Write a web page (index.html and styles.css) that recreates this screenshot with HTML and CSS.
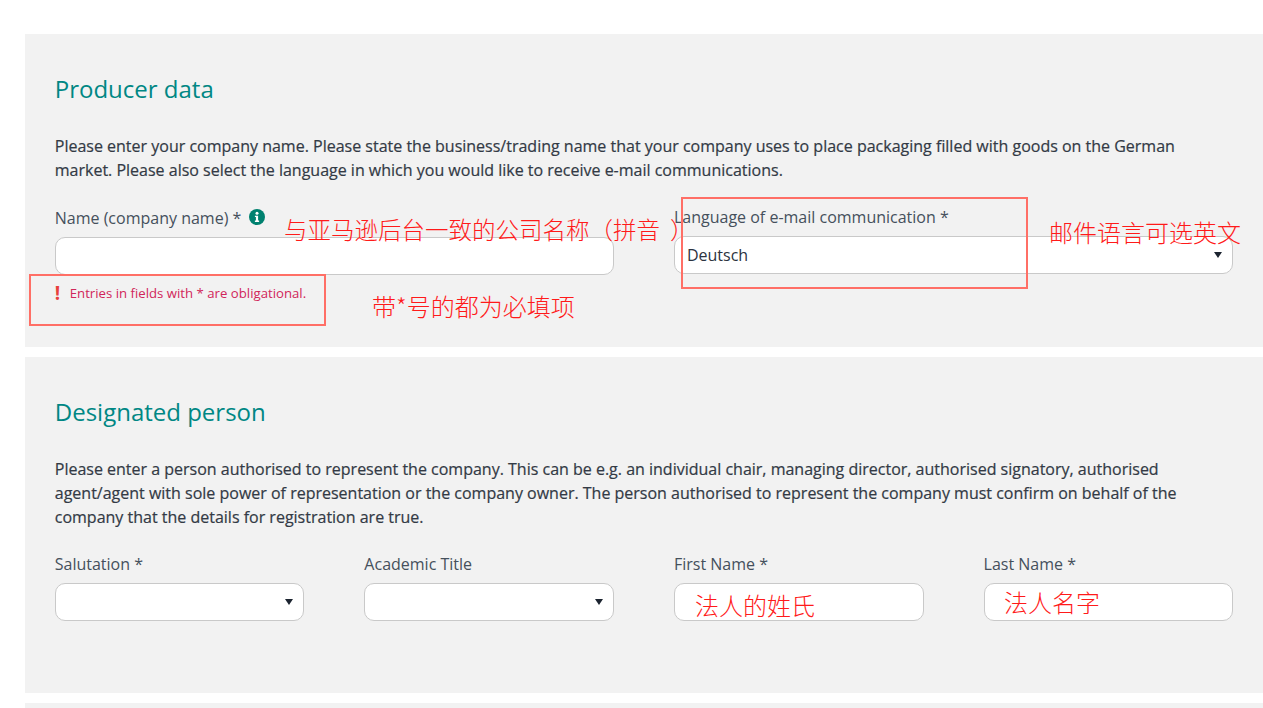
FILE: index.html
```html
<!DOCTYPE html>
<html lang="en">
<head>
<meta charset="utf-8">
<title>Producer data</title>
<link rel="stylesheet" href="styles.css">
</head>
<body>
<main class="page">
  <section class="panel panel-producer">
    <h2 class="panel-title">Producer data</h2>
    <p class="panel-text">Please enter your company name. Please state the business/trading name that your company uses to place packaging filled with goods on the German market. Please also select the language in which you would like to receive e-mail communications.</p>
    <div class="grid grid-two">
      <div class="field">
        <div class="field-label"><span>Name (company name) *</span><svg class="info-icon" viewBox="0 0 16 16" aria-hidden="true"><circle cx="8" cy="8" r="8" fill="#00816f"/><circle cx="8" cy="4.3" r="1.5" fill="#fff"/><path d="M5.9 6.7h3.2v4.9h1v1.3H5.9v-1.3h1v-3.6h-1z" fill="#fff"/></svg></div>
        <div class="control"></div>
        <div class="hint"><span class="hint-mark">!</span><span>Entries in fields with * are obligational.</span></div>
      </div>
      <div class="field field-raised">
        <div class="field-label">Language of e-mail communication *</div>
        <div class="control control-select">Deutsch</div>
      </div>
    </div>
  </section>

  <section class="panel panel-person">
    <h2 class="panel-title">Designated person</h2>
    <p class="panel-text">Please enter a person authorised to represent the company. This can be e.g. an individual chair, managing director, authorised signatory, authorised agent/agent with sole power of representation or the company owner. The person authorised to represent the company must confirm on behalf of the company that the details for registration are true.</p>
    <div class="grid grid-four">
      <div class="field"><div class="field-label">Salutation *</div><div class="control control-select"></div></div>
      <div class="field"><div class="field-label">Academic Title</div><div class="control control-select"></div></div>
      <div class="field"><div class="field-label">First Name *</div><div class="control"></div></div>
      <div class="field"><div class="field-label">Last Name *</div><div class="control"></div></div>
    </div>
  </section>

  <section class="panel panel-next"></section>
</main>

<div class="note note-name">与亚马逊后台一致的公司名称（拼音<span class="note-bracket">）</span></div>
<div class="note note-lang">邮件语言可选英文</div>
<div class="note note-required">带*号的都为必填项</div>
<div class="note note-first">法人的姓氏</div>
<div class="note note-last">法人名字</div>
<div class="mark-box mark-hint"></div>
<div class="mark-box mark-lang"></div>
</body>
</html>
```
FILE: styles.css
```css
* { box-sizing: border-box; }

html, body {
  margin: 0;
  height: 708px;
  overflow: hidden;
  background: #fff;
}

body {
  position: relative;
  font-family: "Open Sans", "Noto Sans CJK SC", sans-serif;
  color: #333a45;
}

.page {
  padding: 34px 0 0 25px;
  display: flex;
  flex-direction: column;
  gap: 10px;
}

.panel {
  background: #f2f2f2;
  padding: 40px 29.85px 0 29.75px;
}

.panel-producer { height: 313px; }
.panel-person { height: 336px; }
.panel-next { height: 40px; padding: 0; }

.panel-title {
  margin: 0;
  font-size: 24px;
  font-weight: 400;
  line-height: 30px;
  color: #008784;
}

.panel-text {
  margin: 30px 0 0;
  font-size: 16px;
  line-height: 24px;
  -webkit-text-stroke: 0.2px #333a45;
}

.grid {
  display: grid;
  column-gap: 60px;
}

.grid-two { grid-template-columns: 1fr 1fr; margin-top: 24px; }
.grid-four { grid-template-columns: repeat(4, 1fr); margin-top: 23px; }

.field-label {
  display: flex;
  align-items: center;
  height: 24px;
  font-size: 16px;
  line-height: 24px;
  color: #45505c;
}

.info-icon {
  width: 16px;
  height: 16px;
  margin-left: 8px;
  margin-top: -2px;
}

.control {
  position: relative;
  height: 38px;
  margin-top: 7px;
  padding-left: 12px;
  background: #fff;
  border: 1px solid #c9c9c9;
  border-radius: 10px;
  font-size: 16px;
  line-height: 36px;
  color: #2c3340;
}

.control-select::after {
  content: "";
  position: absolute;
  right: 10px;
  top: 15px;
  border-left: 4px solid transparent;
  border-right: 4px solid transparent;
  border-top: 6px solid #1c2430;
}

.field-raised { margin-top: -1px; }

.hint {
  display: flex;
  align-items: center;
  margin-top: 6px;
  height: 24px;
  font-size: 13.2px;
  color: #d1265a;
}

.hint-mark {
  width: 15px;
  font-size: 19px;
  font-weight: 700;
  color: #e8413c;
  line-height: 24px;
}

.note {
  position: absolute;
  font-family: "Noto Sans CJK SC", sans-serif;
  font-weight: 300;
  color: #ff1a1a;
  font-size: 24px;
  line-height: 30px;
  white-space: nowrap;
}

.note-bracket { margin-left: 10px; }

.note-name { left: 284px; top: 214px; font-size: 23.5px; }
.note-lang { left: 1049px; top: 217px; }
.note-required { left: 372px; top: 291px; }
.note-first { left: 695px; top: 590px; }
.note-last { left: 1004px; top: 587px; }

.mark-box {
  position: absolute;
  border: 2px solid #ff6f66;
}

.mark-hint { left: 29px; top: 274px; width: 297px; height: 52px; }
.mark-lang { left: 681px; top: 197px; width: 347px; height: 92px; }
```
